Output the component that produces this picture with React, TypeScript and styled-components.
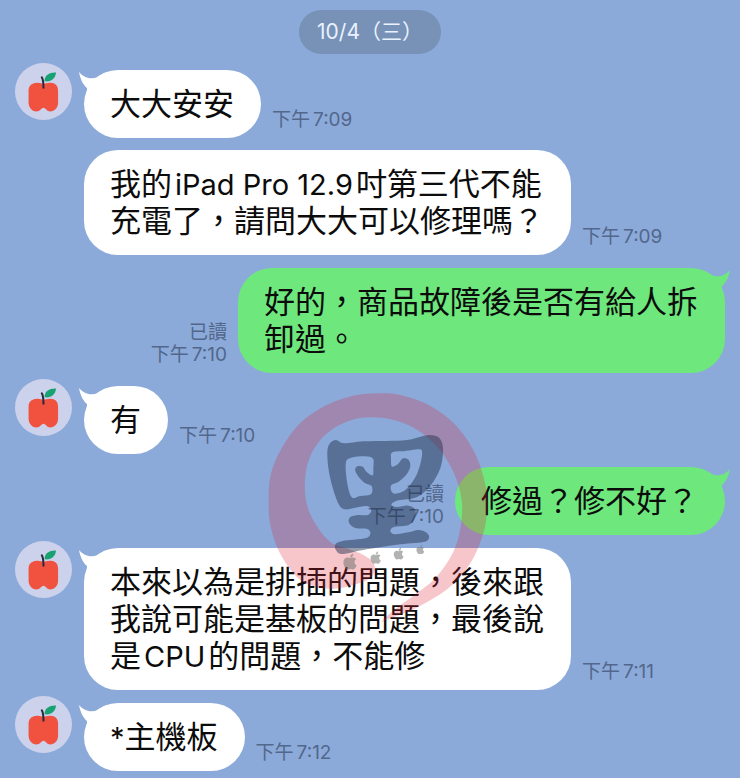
import React from "react";
import styled, { createGlobalStyle, css } from "styled-components";
import { FaApple } from "react-icons/fa";

type Side = "in" | "out";

interface Message {
  id: number;
  side: Side;
  text: string;
  time: string;
  first: boolean;
}

const messages: Message[] = [
  { id: 1, side: "in", text: "大大安安", time: "7:09", first: true },
  { id: 2, side: "in", text: "我的iPad Pro 12.9吋第三代不能充電了，請問大大可以修理嗎？", time: "7:09", first: false },
  { id: 3, side: "out", text: "好的，商品故障後是否有給人拆卸過。", time: "7:10", first: true },
  { id: 4, side: "in", text: "有", time: "7:10", first: true },
  { id: 5, side: "out", text: "修過？修不好？", time: "7:10", first: true },
  { id: 6, side: "in", text: "本來以為是排插的問題，後來跟我說可能是基板的問題，最後說是CPU的問題，不能修", time: "7:11", first: true },
  { id: 7, side: "in", text: "*主機板", time: "7:12", first: true },
];

const GlobalStyle = createGlobalStyle`
  *, *::before, *::after { box-sizing: border-box; }
  html, body, #root { min-height: 100%; }
  body {
    margin: 0;
    background: #8baad9;
    font-family: Inter, "Noto Sans CJK TC", sans-serif;
    text-spacing-trim: space-all;
  }
`;

const Chat = styled.main`
  position: relative;
  padding: 10px 15px 6px;
  overflow: hidden;
`;

const DatePill = styled.h1`
  width: fit-content;
  margin: 0 auto;
  padding: 0 18px;
  border-radius: 22px;
  background: #7891b7;
  color: #e9f2ff;
  font-size: 21px;
  font-weight: 400;
  line-height: 44px;
`;

const Thread = styled.ol`
  display: flex;
  flex-direction: column;
  margin: 3px 0 0;
  padding: 0;
  list-style: none;
`;

const Row = styled.li<{ $side: Side; $first: boolean }>`
  display: flex;
  align-items: flex-end;
  flex-direction: ${(p) => (p.$side === "out" ? "row-reverse" : "row")};
  gap: 11px;
  margin-top: ${(p) => (p.$first ? 13 : 12)}px;
`;

const AvatarSlot = styled.div`
  flex: none;
  align-self: flex-start;
  width: 58px;
`;

const AvatarArt = styled.svg`
  display: block;
  width: 57px;
  height: 57px;
  margin-top: -7px;
`;

const Bubble = styled.div<{ $side: Side }>`
  position: relative;
  max-width: 487px;
  padding: 15px 27px 16px 26px;
  border-radius: 34px;
  background: ${(p) => (p.$side === "out" ? "#6ee87d" : "#ffffff")};
`;

const BubbleText = styled.p`
  margin: 0;
  color: #0c0c0c;
  font-size: 31px;
  line-height: 37px;
`;

const Latin = styled.span`
  margin: 0 3px;
  font-size: 29px;
  line-height: 1;
`;

const Symbol = styled.span`
  font-size: 29px;
  line-height: 1;
`;

const Tail = styled.svg<{ $side: Side }>`
  position: absolute;
  top: 0;
  width: 28px;
  height: 24px;
  ${(p) =>
    p.$side === "out"
      ? css`
          right: -5px;
          fill: #6ee87d;
          transform: scaleX(-1);
        `
      : css`
          left: -5px;
          fill: #ffffff;
        `}
`;

const Meta = styled.div<{ $side: Side }>`
  flex: none;
  padding-bottom: 7px;
  color: #52678b;
  font-size: 19px;
  line-height: 22px;
  text-align: ${(p) => (p.$side === "out" ? "right" : "left")};
`;

const MetaLine = styled.div`
  display: flex;
  justify-content: flex-end;
  gap: 3px;
`;

const Watermark = styled.svg`
  position: absolute;
  top: 380px;
  left: calc(50% - 120px);
  width: 250px;
  height: 250px;
  pointer-events: none;
`;

type Point = [number, number];

/* Closed Catmull-Rom curve through the given points. */
function smooth(points: Point[]): string {
  const n = points.length;
  const at = (i: number) => points[(i + n) % n];
  let d = `M${at(0)[0]} ${at(0)[1]}`;
  for (let i = 0; i < n; i++) {
    const [a, b, c, e] = [at(i - 1), at(i), at(i + 1), at(i + 2)];
    d += `C${b[0] + (c[0] - a[0]) / 6} ${b[1] + (c[1] - a[1]) / 6} ${c[0] - (e[0] - b[0]) / 6} ${c[1] - (e[1] - b[1]) / 6} ${c[0]} ${c[1]}`;
  }
  return d + "Z";
}

const brushRing = smooth([
  [385, 40], [450, 45], [530, 72], [610, 128], [670, 210], [703, 300], [712, 375], [700, 460], [662, 548], [595, 625],
  [500, 683], [420, 715], [395, 725], [430, 692], [500, 640], [560, 590], [610, 515], [632, 440], [635, 360], [612, 280], [570, 210],
  [510, 155], [440, 122], [360, 112], [290, 125], [225, 165], [180, 230], [165, 300], [170, 370], [195, 430],
  [240, 485], [290, 505], [340, 525], [372, 552], [365, 590], [310, 615], [250, 626], [190, 618], [140, 590], [90, 520], [62, 440],
  [56, 370], [62, 285], [95, 205], [150, 130], [230, 75], [310, 47],
]);

const emblem = [
  smooth([
    [240, 190], [258, 180], [282, 190], [340, 184], [410, 183], [470, 180], [512, 170], [540, 165], [568, 174], [579, 205],
    [573, 258], [552, 302], [524, 335], [490, 355], [440, 362], [424, 374], [440, 381], [475, 377], [495, 388], [494, 412],
    [476, 435], [432, 441], [421, 453], [435, 463], [475, 457], [505, 450], [530, 458], [537, 473], [520, 486], [440, 494],
    [350, 508], [280, 522], [259, 512], [256, 494], [278, 483], [345, 475], [361, 461], [352, 447], [316, 444], [297, 428],
    [301, 411], [325, 405], [354, 405], [364, 390], [350, 378], [312, 384], [285, 388], [268, 376], [250, 330], [236, 270], [232, 215],
  ]),
  smooth([
    [288, 246], [304, 233], [345, 229], [369, 236], [370, 262], [368, 286], [350, 276], [338, 260], [320, 260], [316, 273],
    [328, 293], [346, 310], [364, 317], [367, 332], [360, 344], [330, 348], [308, 354], [297, 334], [289, 290],
  ]),
  smooth([
    [427, 217], [465, 213], [505, 208], [516, 214], [513, 244], [501, 282], [482, 313], [462, 333], [435, 341], [424, 333],
    [424, 315], [446, 305], [470, 283], [481, 258], [474, 238], [457, 236], [444, 252], [426, 260], [423, 238],
  ]),
].join("");

const appleMarks = [
  { x: 273, y: 518, size: 54 },
  { x: 356, y: 512, size: 42 },
  { x: 426, y: 501, size: 40 },
  { x: 495, y: 492, size: 32 },
];

function Avatar() {
  return (
    <AvatarArt viewBox="0 0 168 168" role="img" aria-label="蘋果頭像">
      <circle cx="84" cy="84" r="84" fill="#cdd2ec" />
      <path
        d="M60 59C72 57 78 61 84 61C91 61 98 56 110 59C121 61 127 69 127 82V116C127 134 116 143 104 143C94 143 91 133 84 132C77 133 74 143 63 143C50 142 40 133 40 116V82C40 69 47 61 60 59Z"
        fill="#f0523f"
      />
      <path d="M79 42C84 50 84 60 84 73" fill="none" stroke="#292b3d" strokeWidth="6" strokeLinecap="round" />
      <path d="M87 54C87 35 102 27 121 28C119 46 106 57 87 54Z" fill="#18a272" />
    </AvatarArt>
  );
}

/* Western runs are set slightly smaller than the Chinese text, with a little air round the words. */
function renderText(text: string) {
  return text.split(/([\x20-\x7e]+)/).map((part, i) => {
    if (i % 2 === 0) return part;
    return /[A-Za-z]/.test(part) ? <Latin key={i}>{part}</Latin> : <Symbol key={i}>{part}</Symbol>;
  });
}

function MessageRow({ message }: { message: Message }) {
  const { side, first, text, time } = message;
  return (
    <Row $side={side} $first={first}>
      {side === "in" && <AvatarSlot>{first && <Avatar />}</AvatarSlot>}
      <Bubble $side={side}>
        {first && (
          <Tail $side={side} viewBox="0 0 28 24" aria-hidden="true">
            <path d="M0 2C5 8 15 12 25 3L28 12L14 24H8L8 18C4 15 1 8 0 2Z" />
          </Tail>
        )}
        <BubbleText>{renderText(text)}</BubbleText>
      </Bubble>
      <Meta $side={side}>
        {side === "out" && <div>已讀</div>}
        <MetaLine>
          <span>下午</span>
          <time>{time}</time>
        </MetaLine>
      </Meta>
    </Row>
  );
}

export default function App() {
  return (
    <>
      <GlobalStyle />
      <Chat lang="zh-Hant">
        <DatePill>10/4（三）</DatePill>
        <Thread>
          {messages.map((message) => (
            <MessageRow key={message.id} message={message} />
          ))}
        </Thread>
        <Watermark viewBox="0 0 750 750" aria-hidden="true">
          <path d={brushRing} fill="rgba(220, 35, 55, 0.26)" />
          <path d={emblem} fill="rgba(28, 44, 72, 0.46)" fillRule="evenodd" />
          {appleMarks.map(({ x, y, size }) => (
            <FaApple key={x} x={x} y={y} size={size} color="rgba(115, 115, 112, 0.55)" />
          ))}
        </Watermark>
      </Chat>
    </>
  );
}
